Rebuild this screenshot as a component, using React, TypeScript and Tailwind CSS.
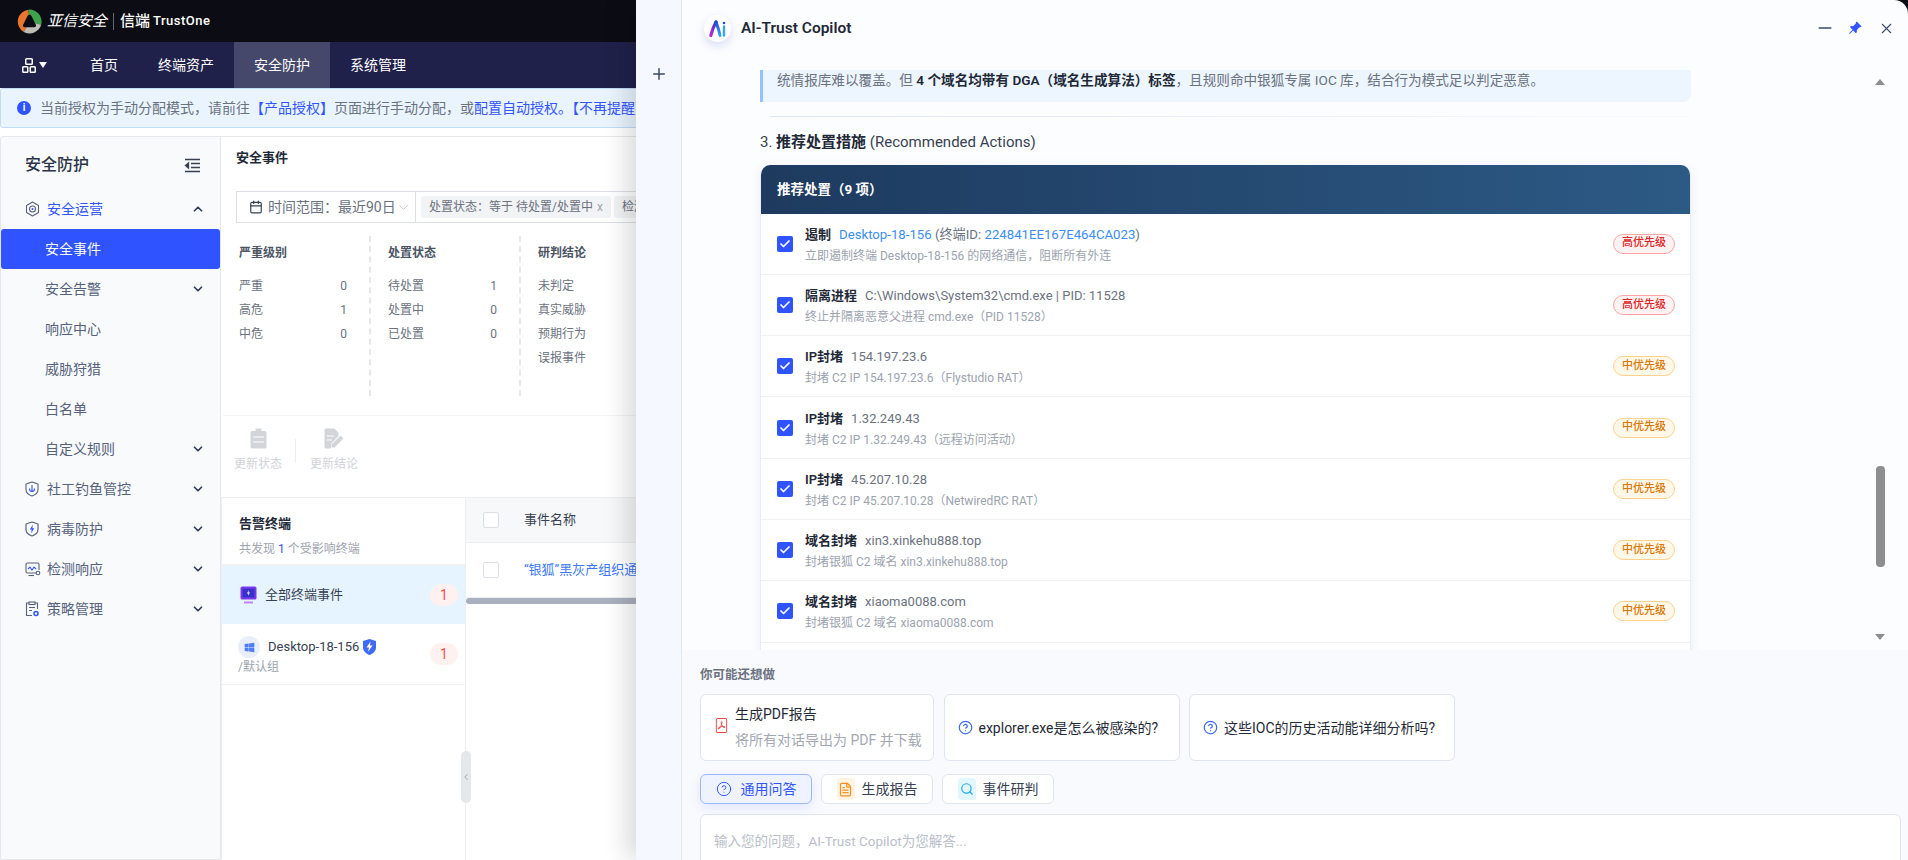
import type { JSX, ReactNode } from "react";
import { Calendar, Check, ChevronDown, ChevronLeft, ChevronUp, CircleHelp, FileText, Minus, Plus, Search, X } from "lucide-react";
import { BsFilePdf, BsPinAngleFill } from "react-icons/bs";
import { FaWindows } from "react-icons/fa";

const NAV_ITEMS = ["首页", "终端资产", "安全防护", "系统管理"];

const ACTIONS = [
  { title: "遏制", detail: "", sub: "立即遏制终端 Desktop-18-156 的网络通信，阻断所有外连", high: true },
  { title: "隔离进程", detail: "C:\\Windows\\System32\\cmd.exe | PID: 11528", sub: "终止并隔离恶意父进程 cmd.exe（PID 11528）", high: true },
  { title: "IP封堵", detail: "154.197.23.6", sub: "封堵 C2 IP 154.197.23.6（Flystudio RAT）", high: false },
  { title: "IP封堵", detail: "1.32.249.43", sub: "封堵 C2 IP 1.32.249.43（远程访问活动）", high: false },
  { title: "IP封堵", detail: "45.207.10.28", sub: "封堵 C2 IP 45.207.10.28（NetwiredRC RAT）", high: false },
  { title: "域名封堵", detail: "xin3.xinkehu888.top", sub: "封堵银狐 C2 域名 xin3.xinkehu888.top", high: false },
  { title: "域名封堵", detail: "xiaoma0088.com", sub: "封堵银狐 C2 域名 xiaoma0088.com", high: false },
];

const STATS = [
  { title: "严重级别", width: "w-[132px]", rows: [["严重", "0"], ["高危", "1"], ["中危", "0"]] },
  { title: "处置状态", width: "w-[150px]", rows: [["待处置", "1"], ["处置中", "0"], ["已处置", "0"]] },
  { title: "研判结论", width: "w-[110px]", rows: [["未判定", ""], ["真实威胁", ""], ["预期行为", ""], ["误报事件", ""]] },
];

function LogoMark(): JSX.Element {
  return (
    <svg width="25" height="25" viewBox="0 0 24 24">
      <path d="M12 12 6.500 22A11.500 11.500 0 0 1 11 .6z" fill="#e8762c" />
      <path d="M12 12 11 .6A11.500 11.500 0 0 1 23.200 15z" fill="#3fa34d" />
      <path d="M12 12 23.200 15A11.500 11.500 0 0 1 6.500 22z" fill="#bdbdb6" />
      <path d="M12 5.500c.8 0 1.400.5 1.900 1.300l4.100 8c.7 1.400 0 2.700-1.600 2.700H7.600c-1.600 0-2.300-1.300-1.600-2.700l4.100-8c.5-.8 1.100-1.300 1.900-1.300z" fill="#0c0d14" />
    </svg>
  );
}

function GridIcon(): JSX.Element {
  return (
    <svg width="14" height="15" viewBox="0 0 14 15" fill="none" stroke="#fff" strokeWidth="1.500">
      <rect x="3.750" y="0.750" width="6.500" height="5.500" rx="0.800" />
      <rect x="0.750" y="8.750" width="5" height="5.500" rx="0.800" />
      <rect x="8.250" y="8.750" width="5" height="5.500" rx="0.800" />
    </svg>
  );
}

function CollapseIcon(): JSX.Element {
  return (
    <svg width="16" height="15" viewBox="0 0 16 15" fill="none" stroke="#374151" strokeWidth="1.3">
      <path d="M1 1.500h15M7 5.500h9M7 9.500h9M1 13.500h15" />
      <path d="M4.500 5 1.500 7.500l3 2.500z" fill="#374151" />
    </svg>
  );
}

function OpsIcon(): JSX.Element {
  return (
    <svg width="15" height="16" viewBox="0 0 15 16" fill="none" stroke="#56627c" strokeWidth="1.1">
      <path d="M7.500 1 13.500 4.500v7L7.500 15l-6-3.500v-7z" strokeLinejoin="round" />
      <circle cx="7.500" cy="8" r="3" />
      <circle cx="7.500" cy="8" r="1" fill="#3355ff" stroke="none" />
    </svg>
  );
}

function FishingIcon(): JSX.Element {
  return (
    <svg width="14" height="16" viewBox="0 0 14 16" fill="none" stroke="#56627c" strokeWidth="1.1">
      <path d="M7 1 13 3v5.500c0 3.500-3 5.500-6 6.500-3-1-6-3-6-6.500V3z" strokeLinejoin="round" />
      <path d="M7 4v6M4.500 7.500C4.500 10 6 10.500 7 10.500S9.500 10 9.500 7.500" stroke="#3355ff" />
    </svg>
  );
}

function VirusIcon(): JSX.Element {
  return (
    <svg width="14" height="16" viewBox="0 0 14 16" fill="none" stroke="#56627c" strokeWidth="1.2">
      <path d="M7 1 13 3v5.500c0 3.500-3 5.500-6 6.500-3-1-6-3-6-6.500V3z" strokeLinejoin="round" />
      <path d="M8 3.500 4.800 8.500h2L6 12.500l3.300-5.200h-2z" fill="#3355ff" stroke="none" />
    </svg>
  );
}

function DetectIcon(): JSX.Element {
  return (
    <svg width="16" height="15" viewBox="0 0 16 15" fill="none" stroke="#56627c" strokeWidth="1.1">
      <path d="M11 11H2.500A1.500 1.500 0 0 1 1 9.500v-7A1.500 1.500 0 0 1 2.500 1h10A1.500 1.500 0 0 1 14 2.500V8" />
      <path d="M3 7l2-2 2 3 2-3 2 2" stroke="#3355ff" />
      <path d="M3.500 13.500H9" />
      <circle cx="13" cy="11" r="1.800" />
    </svg>
  );
}

function PolicyIcon(): JSX.Element {
  return (
    <svg width="14" height="16" viewBox="0 0 14 16" fill="none" stroke="#56627c" strokeWidth="1.1">
      <path d="M4 2H1.500v12.500H7M10 2h2.500v6" />
      <rect x="4" y="1" width="6" height="2.500" />
      <path d="M4 6.500h6M4 9.500h3" />
      <circle cx="11" cy="12.500" r="2" stroke="#3355ff" strokeWidth="1.500" />
    </svg>
  );
}

function StatusIcon(): JSX.Element {
  return (
    <svg width="17" height="21" viewBox="0 0 17 21" fill="#d4d5d8">
      <path d="M5.500 3V1.500A1 1 0 0 1 6.500.5h4a1 1 0 0 1 1 1V3h3.500A1.500 1.500 0 0 1 16.500 4.500V19A1.500 1.500 0 0 1 15 20.500H2A1.500 1.500 0 0 1 .5 19V4.500A1.500 1.500 0 0 1 2 3z" />
      <path d="M3 9h11M3 14h11" stroke="#fff" strokeWidth="1" />
    </svg>
  );
}

function ConclusionIcon(): JSX.Element {
  return (
    <svg width="20" height="21" viewBox="0 0 20 21" fill="#d4d5d8">
      <path d="M1.500.5h9l4 4.500v3L7 16v4.500H1.500A1 1 0 0 1 .5 19.500v-18a1 1 0 0 1 1-1z" />
      <path d="M3 8h7M3 12h5" stroke="#fff" strokeWidth="1.200" />
      <path d="M16.500 7.500 19.500 10.500 10.500 19.500H7.500v-3z" />
    </svg>
  );
}

function MonitorIcon(): JSX.Element {
  return (
    <svg width="17" height="18" viewBox="0 0 17 18">
      <rect x="0.500" y="0.500" width="16" height="13" rx="1.500" fill="#7c3aed" />
      <rect x="2.500" y="2.500" width="12" height="9" fill="#3730c9" />
      <path d="M8.800 4 7 7.500h1.500L8 10l2-3.500H8.500z" fill="#fff" />
      <rect x="4" y="15.500" width="9" height="2" fill="#c084fc" />
    </svg>
  );
}

function ShieldBolt(): JSX.Element {
  return (
    <svg width="13" height="16" viewBox="0 0 13 16">
      <path d="M6.500 0 13 2v6.500c0 3.500-3 6-6.500 7.500C3 14.500 0 12 0 8.500V2z" fill="#3f6cf4" />
      <path d="M7.500 2.500 3.500 8.500h2.500L5 13l4.500-6.500H7z" fill="#fff" />
    </svg>
  );
}

function CopilotLogo(): JSX.Element {
  return (
    <svg width="17" height="17" viewBox="0 0 17 17" fill="none">
      <defs>
        <linearGradient id="ai-logo-left" x1="0" y1="1" x2="0.600" y2="0">
          <stop offset="0" stopColor="#c026d3" />
          <stop offset="1" stopColor="#4338ca" />
        </linearGradient>
        <linearGradient id="ai-logo-right" x1="0" y1="0" x2="0" y2="1">
          <stop offset="0" stopColor="#1d4ed8" />
          <stop offset="1" stopColor="#38a3f5" />
        </linearGradient>
      </defs>
      <path d="M1.800 15.500C3 11 5 5.500 7 2" stroke="url(#ai-logo-left)" strokeWidth="3.200" strokeLinecap="round" />
      <path d="M7 2c1.500 3.500 3 8.500 4 13.500" stroke="url(#ai-logo-right)" strokeWidth="3" strokeLinecap="round" />
      <path d="M15 6.500v9" stroke="#38a3f5" strokeWidth="2.400" strokeLinecap="round" />
      <circle cx="15" cy="3" r="1.300" fill="#1d4ed8" />
    </svg>
  );
}

function SideItem({ icon, label, sub, chevron, active, open }: { icon?: ReactNode; label: string; sub?: boolean; chevron?: boolean; active?: boolean; open?: boolean }): JSX.Element {
  return (
    <div className={`flex h-10 items-center rounded-[3px] text-sm ${active ? "bg-[#2f54ff] text-white" : "text-[#56627c]"} ${sub ? "pl-[44px]" : "pl-6"}`}>
      {icon && <span className="flex w-[22px] shrink-0">{icon}</span>}
      <span className={open ? "text-[#3355ff]" : ""}>{label}</span>
      {chevron && (
        <span className="ml-auto pr-[15px] text-[#2f3d5c]">
          {open ? <ChevronUp size={14} strokeWidth={3} /> : <ChevronDown size={14} strokeWidth={3} />}
        </span>
      )}
    </div>
  );
}

function Sidebar(): JSX.Element {
  return (
    <aside className="w-[221px] shrink-0 rounded-tl-[3px] border border-[#e5e7eb] bg-[#f8fafc]">
      <div className="flex h-[52px] items-center justify-between pl-6 pr-[20px] pt-[4px]">
        <span className="text-base font-medium text-[#2b3445]">安全防护</span>
        <CollapseIcon />
      </div>
      <SideItem icon={<OpsIcon />} label="安全运营" chevron open />
      <SideItem label="安全事件" sub active />
      <SideItem label="安全告警" sub chevron />
      <SideItem label="响应中心" sub />
      <SideItem label="威胁狩猎" sub />
      <SideItem label="白名单" sub />
      <SideItem label="自定义规则" sub chevron />
      <SideItem icon={<FishingIcon />} label="社工钓鱼管控" chevron />
      <SideItem icon={<VirusIcon />} label="病毒防护" chevron />
      <SideItem icon={<DetectIcon />} label="检测响应" chevron />
      <SideItem icon={<PolicyIcon />} label="策略管理" chevron />
    </aside>
  );
}

function AlertBadge(): JSX.Element {
  return <span className="flex h-[22px] w-7 items-center justify-center rounded-full bg-[#fff1f0] text-sm text-[#ff4d4f]">1</span>;
}

function MainArea(): JSX.Element {
  return (
    <main className="flex min-w-0 flex-1 flex-col border-t border-[#e5e7eb]">
      <div className="flex h-[54px] items-start pl-[15px] pt-[11px] text-[13px] font-semibold leading-5 text-[#1f2937]">安全事件</div>
      <div className="flex h-[32px] shrink-0 items-center overflow-hidden pl-[15px]">
        <div className="flex h-full w-[180px] shrink-0 items-center border border-[#dcdfe6] pl-3 text-sm text-[#6b7280]">
          <Calendar size={14} className="mr-[5px] text-[#374151]" />
          <span className="whitespace-nowrap">时间范围：最近90日</span>
          <ChevronDown size={15} strokeWidth={1.200} className="text-[#b5b9c2]" />
        </div>
        <div className="flex h-full flex-1 items-center gap-[3px] border border-l-0 border-[#dcdfe6] pl-[5px]">
          <span className="flex h-[22px] shrink-0 items-center whitespace-nowrap rounded-[3px] bg-[#f2f3f5] px-2 text-xs text-[#6b7280]">
            处置状态：等于 待处置/处置中 <span className="ml-1 text-[#a0a5b0]">x</span>
          </span>
          <span className="flex h-[22px] shrink-0 items-center whitespace-nowrap rounded-[3px] bg-[#f2f3f5] px-2 text-xs text-[#6b7280]">检测引擎</span>
        </div>
      </div>
      <div className="mt-[13px] flex h-[160px] shrink-0 pl-[16px]">
        {STATS.map((col, index) => (
          <div key={col.title} className={`${col.width} shrink-0 ${index > 0 ? "border-l-2 border-dashed border-[#e5e7eb] pl-[17px]" : "pl-[2px]"} ${index < 2 ? "pr-[22px]" : ""}`}>
            <div className="pb-[11px] pt-[7px] text-xs font-semibold leading-5 text-[#4b5563]">{col.title}</div>
            {col.rows.map(([name, value]) => (
              <div key={name} className="flex h-6 items-center justify-between text-xs text-[#6b7280]">
                <span>{name}</span>
                <span>{value}</span>
              </div>
            ))}
          </div>
        ))}
      </div>
      <div className="ml-[2px] mt-[19px] flex h-[82px] shrink-0 items-start border-t border-[#f3f4f6] pl-[5px] pt-[12px]">
        <div className="flex w-[60px] flex-col items-center text-xs text-[#d1d3d8]">
          <StatusIcon />
          <span className="mt-[5px] leading-5">更新状态</span>
        </div>
        <div className="ml-[7px] mt-[11px] h-[24px] w-px bg-[#eceef1]" />
        <div className="ml-[3px] flex w-[70px] flex-col items-center text-xs text-[#d1d3d8]">
          <ConclusionIcon />
          <span className="mt-[5px] leading-5">更新结论</span>
        </div>
      </div>
      <div className="relative flex min-h-0 flex-1">
        <section className="w-[245px] shrink-0 border-x border-t border-[#eceef1]">
          <div className="h-[68px] border-b-2 border-[#f0f1f3] pl-[17px] pt-[16px]">
            <div className="text-[13px] font-semibold leading-5 text-[#1f2937]">告警终端</div>
            <div className="mt-[7px] text-xs leading-4 text-[#9ca3af]">
              共发现 <span className="text-[#3355ff]">1</span> 个受影响终端
            </div>
          </div>
          <div className="flex h-[58px] items-center bg-[#e6f4ff] pl-[18px] pr-[7px]">
            <MonitorIcon />
            <span className="ml-[8px] text-[13px] text-[#374151]">全部终端事件</span>
            <span className="ml-auto"><AlertBadge /></span>
          </div>
          <div className="flex h-[61px] items-center border-b border-[#f0f1f3] pl-[16px] pr-[7px]">
            <div className="pt-[4px]">
              <div className="flex items-center">
                <span className="flex h-[22px] w-[22px] items-center justify-center rounded-full bg-[#e8eefb] text-[#4f7df3]"><FaWindows size={11} /></span>
                <span className="ml-[8px] text-[13px] text-[#374151]">Desktop-18-156</span>
                <span className="ml-[4px]"><ShieldBolt /></span>
              </div>
              <div className="text-xs leading-[18px] text-[#9ca3af]">/默认组</div>
            </div>
            <span className="ml-auto"><AlertBadge /></span>
          </div>
        </section>
        <section className="min-w-0 flex-1">
          <div className="flex h-[46px] items-center border-y border-[#eceef1] bg-[#f7f8fa] pl-[17px]">
            <span className="h-4 w-4 shrink-0 rounded-[2px] border border-[#dcdfe6] bg-white" />
            <span className="ml-[25px] text-[13px] text-[#374151]">事件名称</span>
          </div>
          <div className="flex h-[55px] items-center overflow-hidden border-b border-[#eceef1] pl-[17px]">
            <span className="h-4 w-4 shrink-0 rounded-[2px] border border-[#dcdfe6] bg-white" />
            <span className="ml-[25px] whitespace-nowrap text-[13px] text-[#3b78f5]">“银狐”黑灰产组织通过</span>
          </div>
          <div className="h-[6px] w-full rounded-[3px] bg-[#aab0bf]" />
        </section>
        <div className="absolute left-[240px] top-[254px] flex h-[52px] w-[10px] items-center justify-center rounded-[5px] bg-[#e5e7eb] text-[#7b8190]">
          <ChevronLeft size={12} strokeWidth={1.500} />
        </div>
      </div>
    </main>
  );
}

function PriorityBadge({ high }: { high: boolean }): JSX.Element {
  return (
    <span className={`flex h-5 w-[62px] shrink-0 items-center justify-center rounded-full border text-[11px] font-medium ${high ? "border-[#fca5a5] bg-[#fef2f2] text-[#dc2626]" : "border-[#fcd38d] bg-[#fff7e8] text-[#d97706]"}`}>
      {high ? "高优先级" : "中优先级"}
    </span>
  );
}

function ActionRow({ title, detail, sub, high }: { title: string; detail: string; sub: string; high: boolean }): JSX.Element {
  return (
    <div className="flex h-[61.3px] items-center border-b border-[#f0f1f3] pl-4 pr-[15px]">
      <span className="flex h-4 w-4 shrink-0 items-center justify-center rounded-[2px] bg-[#2f54ff] text-white">
        <Check size={12} strokeWidth={3.500} />
      </span>
      <div className="ml-3 flex-1 pt-[1px]">
        <div className="flex items-center text-[13px] leading-5 text-[#6b7280]">
          <span className="font-semibold text-[#1f2937]">{title}</span>
          {detail ? (
            <span className="ml-2">{detail}</span>
          ) : (
            <span className="ml-2 text-[13.2px]">
              <span className="text-[#3b8ef5]">Desktop-18-156</span> (终端ID: <span className="text-[#3b8ef5]">224841EE167E464CA023</span>)
            </span>
          )}
        </div>
        <div className="mt-[3px] text-xs leading-4 text-[#9ca3af]">{sub}</div>
      </div>
      <PriorityBadge high={high} />
    </div>
  );
}

function SuggestCard({ text, width }: { text: string; width: string }): JSX.Element {
  return (
    <div className={`flex h-[67px] ${width} shrink-0 items-center gap-[6px] whitespace-nowrap rounded-md border border-[#dfe4f3] bg-white pl-[13px] text-sm text-[#1f2937]`}>
      <CircleHelp size={15} className="text-[#3f6cf4]" />
      {text}
    </div>
  );
}

function CopilotPanel(): JSX.Element {
  return (
    <aside className="absolute left-[636px] top-0 flex h-[860px] w-[1272px] overflow-hidden rounded-tr-[14px] bg-[#fcfdff] shadow-[-10px_0_24px_rgba(0,0,0,0.14)]">
      <div className="flex w-[46px] shrink-0 justify-center border-r border-[#e3e7f5] bg-[#f5f8ff] pt-[65px]">
        <Plus size={18} className="text-[#3b4a6b]" />
      </div>
      <div className="flex min-w-0 flex-1 flex-col">
        <header className="flex h-[70px] shrink-0 items-start pl-[22px] pr-[13px] pt-[15px]">
          <span className="flex h-[27px] w-[27px] items-center justify-center rounded-full bg-white shadow-[0_4px_10px_rgba(90,110,200,0.22)]">
            <CopilotLogo />
          </span>
          <span className="ml-[10px] text-[15.5px] font-semibold leading-[27px] text-[#1f2937]">AI-Trust Copilot</span>
          <div className="ml-auto flex items-center pt-[3px] text-[#3b4a6b]">
            <Minus size={20} strokeWidth={1.800} />
            <BsPinAngleFill size={14} className="ml-[13px] text-[#3355ff]" />
            <X size={17} strokeWidth={1.500} className="ml-[16px]" />
          </div>
        </header>
        <div className="relative h-[580px] shrink-0 overflow-hidden pl-[78px]">
          <div className="w-[931px]">
            <blockquote className="h-[32px] rounded-br-lg border-l-[3px] border-[#93c0ff] bg-[#edf5ff] pl-[14px] text-[13.6px] leading-[20px] text-[#6b7280]">
              统情报库难以覆盖。但 <strong className="font-semibold text-[#1f2937]">4 个域名均带有 DGA（域名生成算法）标签</strong>，且规则命中银狐专属 IOC 库，结合行为模式足以判定恶意。
            </blockquote>
            <div className="ml-[10px] mt-[14px] h-px bg-gradient-to-r from-[#dde5f0] to-[#f8fafc]" />
            <div className="mt-[15px] h-[20px] text-[15px] leading-5 text-[#374151]">
              3. <span className="font-semibold text-[#1f2937]">推荐处置措施</span> (Recommended Actions)
            </div>
            <div className="mt-[13px] overflow-hidden rounded-t-[10px] border-x border-[#e8edf5] bg-white shadow-[0_2px_12px_rgba(30,60,110,0.08)]">
              <div className="flex h-[48.5px] items-center bg-gradient-to-r from-[#1e3a5f] to-[#2c5a85] pl-4 text-[13.5px] font-bold text-white">推荐处置（9 项）</div>
              {ACTIONS.map((action) => (
                <ActionRow key={action.sub} {...action} />
              ))}
              <div className="h-[20px]" />
            </div>
          </div>
          <span className="absolute left-[1193px] top-[9px] h-0 w-0 border-x-[5px] border-b-[6px] border-x-transparent border-b-[#8c8e90]" />
          <span className="absolute left-[1194px] top-[396px] h-[101px] w-[9px] rounded-[4px] bg-[#8c8e90]" />
          <span className="absolute left-[1193px] top-[564px] h-0 w-0 border-x-[5px] border-t-[6px] border-x-transparent border-t-[#8c8e90]" />
        </div>
        <div className="relative z-10 min-h-0 flex-1 bg-[#f9fafe] pl-[18px] pr-[7px] pt-[16px]">
          <div className="text-[12.5px] font-semibold leading-[18px] text-[#6b7280]">你可能还想做</div>
          <div className="mt-[10px] flex gap-[9.5px]">
            <div className="flex h-[67px] w-[234px] shrink-0 items-center gap-[6px] rounded-md border border-[#dfe4f3] bg-white pb-[4px] pl-[13px]">
              <BsFilePdf size={15} className="text-[#ef4444]" />
              <div className="whitespace-nowrap">
                <div className="text-sm leading-5 text-[#1f2937]">生成PDF报告</div>
                <div className="mt-[8px] text-sm leading-4 text-[#a3a8b3]">将所有对话导出为 PDF 并下载</div>
              </div>
            </div>
            <SuggestCard text="explorer.exe是怎么被感染的?" width="w-[236px]" />
            <SuggestCard text="这些IOC的历史活动能详细分析吗?" width="w-[266px]" />
          </div>
          <div className="mt-[13px] flex gap-[9px]">
            <div className="flex h-[30px] w-[112px] items-center justify-center gap-[9px] rounded-md border border-[#9db8f8] bg-[#eef3ff] text-sm text-[#3355ff] shadow-[0_4px_12px_rgba(80,110,240,0.14)]">
              <CircleHelp size={16} strokeWidth={1.500} />
              通用问答
            </div>
            <div className="flex h-[30px] w-[112px] items-center justify-center gap-[7px] rounded-md border border-[#dfe4f3] bg-white text-sm text-[#374151]">
              <span className="flex h-[22px] w-[18px] items-center justify-center rounded bg-[#fff3e2] text-[#f5901e]"><FileText size={15} /></span>
              生成报告
            </div>
            <div className="flex h-[30px] w-[112px] items-center justify-center gap-[7px] rounded-md border border-[#dfe4f3] bg-white text-sm text-[#374151]">
              <span className="flex h-[22px] w-[18px] items-center justify-center rounded bg-[#e1f6fd] text-[#25a9e0]"><Search size={14} /></span>
              事件研判
            </div>
          </div>
          <div className="mt-[10px] h-[60px] rounded-t-md border border-[#dfe4f3] bg-white pl-[13px] pt-[16px] text-[13.5px] leading-5 text-[#b9bec9]">
            输入您的问题，AI-Trust Copilot为您解答...
          </div>
        </div>
      </div>
    </aside>
  );
}

export default function App(): JSX.Element {
  return (
    <div className="relative flex h-[860px] w-[1908px] flex-col overflow-hidden bg-white font-['Roboto','Noto_Sans_CJK_SC',sans-serif]">
      <header className="flex h-[42px] shrink-0 items-center bg-[#0c0d14] pl-[17px] text-white">
        <LogoMark />
        <span className="ml-[5px] text-[15px] italic">亚信安全</span>
        <span className="mx-[6px] h-[17px] w-px bg-[#666873]" />
        <span className="text-[15px] font-medium">信端</span>
        <span className="ml-[3px] text-[13px] font-medium tracking-[0.5px]">TrustOne</span>
      </header>
      <nav className="flex h-[46px] shrink-0 items-center bg-[#20214a] text-sm text-white">
        <div className="flex w-[70px] items-center justify-start gap-[3px] pl-[22px]">
          <GridIcon />
          <span className="h-0 w-0 border-x-[4px] border-t-[6px] border-x-transparent border-t-white" />
        </div>
        {NAV_ITEMS.map((item) => (
          <div key={item} className={`flex h-full items-center px-[20px] ${item === "安全防护" ? "bg-[#45486b]" : ""}`}>{item}</div>
        ))}
      </nav>
      <div className="flex h-[40px] shrink-0 items-center rounded-[3px] border border-[#bfdcfb] bg-[#e9f4ff] pl-[16px] text-sm text-[#6b7280]">
        <span className="mr-[9px] flex h-[14px] w-[14px] items-center justify-center rounded-full bg-[#2f54ff] text-[10px] font-bold text-white">i</span>
        <span className="whitespace-nowrap">
          当前授权为手动分配模式，请前往<span className="text-[#3355ff]">【产品授权】</span>页面进行手动分配，或<span className="text-[#3355ff]">配置自动授权。【不再提醒】</span>
        </span>
      </div>
      <div className="mt-[8px] flex min-h-0 flex-1">
        <Sidebar />
        <MainArea />
      </div>
      <CopilotPanel />
    </div>
  );
}
